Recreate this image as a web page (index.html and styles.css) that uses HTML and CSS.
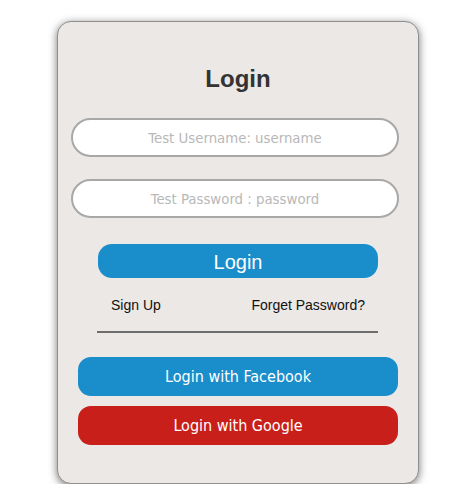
FILE: index.html
```html
<!DOCTYPE html>
<html>
<head>
<meta charset="utf-8">
<title>Login</title>
<link rel="stylesheet" href="styles.css">
</head>
<body>
<div class="card">
  <h1 class="title">Login</h1>
  <input class="field" type="text" placeholder="Test Username: username">
  <input class="field field-second" type="password" placeholder="Test Password : password">
  <button class="btn-login" type="button">Login</button>
  <div class="links">
    <a class="link" href="#">Sign Up</a>
    <a class="link" href="#">Forget Password?</a>
  </div>
  <div class="divider"></div>
  <button class="btn-social btn-facebook" type="button">Login with Facebook</button>
  <button class="btn-social btn-google" type="button">Login with Google</button>
</div>
</body>
</html>
```

FILE: styles.css
```css
html, body {
  margin: 0;
  padding: 0;
  background: #ffffff;
}

.card {
  box-sizing: border-box;
  width: 362px;
  height: 463px;
  margin: 21px 0 0 57px;
  padding: 43px 0 0 0;
  background: #ebe8e6;
  border: 1px solid #8f8f8f;
  border-radius: 14px;
  box-shadow: 0 2px 8px rgba(0, 0, 0, 0.55);
  display: flex;
  flex-direction: column;
}

.title {
  margin: 0;
  height: 28px;
  line-height: 28px;
  font-family: "Liberation Sans", Arial, sans-serif;
  font-weight: bold;
  font-size: 24px;
  color: #333333;
  text-align: center;
}

.field {
  box-sizing: border-box;
  display: block;
  width: 328px;
  height: 39px;
  margin: 25px 0 0 13px;
  padding: 0 10px;
  border: 2px solid #a8a8a8;
  border-radius: 20px;
  background: #ffffff;
  outline: none;
  text-align: center;
  font-family: "DejaVu Sans Condensed", "DejaVu Sans", sans-serif;
  font-size: 14.8px;
  color: #555;
}

.field::placeholder {
  color: #b8b8b8;
}

.field-second {
  margin-top: 22px;
}

.btn-login {
  box-sizing: border-box;
  display: block;
  width: 280px;
  height: 34px;
  margin: 26px 0 0 40px;
  padding: 0;
  border: none;
  border-radius: 14px;
  background: #1a8dcb;
  color: #ffffff;
  font-family: "Liberation Sans", Arial, sans-serif;
  font-size: 20px;
  line-height: 36px;
  text-align: center;
}

.links {
  display: flex;
  justify-content: space-between;
  width: 280px;
  box-sizing: border-box;
  margin: 17px 0 0 40px;
  padding: 0 13px;
  height: 20px;
  line-height: 20px;
}

.link {
  font-family: "Liberation Sans", Arial, sans-serif;
  font-size: 14px;
  color: #111111;
  text-decoration: none;
}

.divider {
  width: 281px;
  height: 2px;
  margin: 16px 0 0 39px;
  background: #6e6e6e;
}

.btn-social {
  box-sizing: border-box;
  display: block;
  width: 320px;
  height: 39px;
  margin: 24px 0 0 20px;
  padding: 0;
  border: none;
  border-radius: 13px;
  color: #ffffff;
  font-family: "DejaVu Sans Condensed", "DejaVu Sans", sans-serif;
  font-size: 16px;
  line-height: 39px;
  text-align: center;
}

.btn-facebook {
  background: #1a8dcb;
}

.btn-google {
  margin-top: 10px;
  background: #c91f1a;
}
```
